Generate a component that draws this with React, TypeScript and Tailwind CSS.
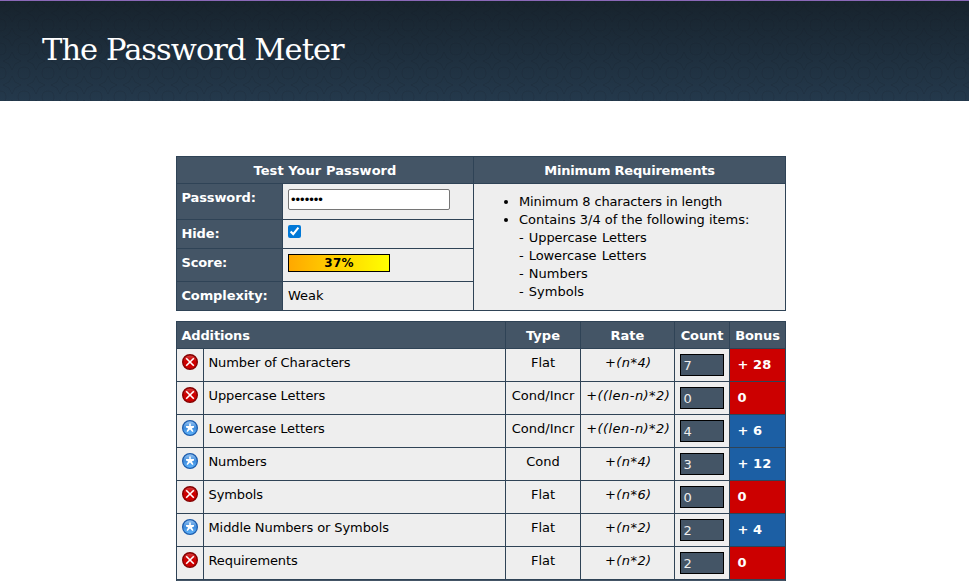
import type { ReactNode } from "react";

type Row = { ok: boolean; name: string; type: string; rate: string; count: string; bonus: string };

const rows: Row[] = [
  { ok: false, name: "Number of Characters", type: "Flat", rate: "+(n*4)", count: "7", bonus: "+ 28" },
  { ok: false, name: "Uppercase Letters", type: "Cond/Incr", rate: "+((len-n)*2)", count: "0", bonus: "0" },
  { ok: true, name: "Lowercase Letters", type: "Cond/Incr", rate: "+((len-n)*2)", count: "4", bonus: "+ 6" },
  { ok: true, name: "Numbers", type: "Cond", rate: "+(n*4)", count: "3", bonus: "+ 12" },
  { ok: false, name: "Symbols", type: "Flat", rate: "+(n*6)", count: "0", bonus: "0" },
  { ok: true, name: "Middle Numbers or Symbols", type: "Flat", rate: "+(n*2)", count: "2", bonus: "+ 4" },
  { ok: false, name: "Requirements", type: "Flat", rate: "+(n*2)", count: "2", bonus: "0" },
];

function Head({ children, className = "pl-[4.4px] tracking-[-0.1px]" }: { children: ReactNode; className?: string }) {
  return (
    <div className={`bg-[#445566] pt-[5px] font-bold text-white whitespace-nowrap leading-[18px] ${className}`}>
      {children}
    </div>
  );
}

function StatusIcon({ ok }: { ok: boolean }) {
  return ok ? (
    <svg width="16" height="16" viewBox="0 0 16 16">
      <defs>
        <linearGradient id="blue" x1="0" y1="0" x2="0" y2="1">
          <stop offset="0" stopColor="#9cc8f4" />
          <stop offset="0.5" stopColor="#3f8cdc" />
          <stop offset="1" stopColor="#62b8ff" />
        </linearGradient>
      </defs>
      <circle cx="8" cy="8" r="7.4" fill="url(#blue)" stroke="#1c5cac" strokeWidth="1.2" />
      <path d="M7.200 3.500H8.800V6H12V7.500L9.900 8.400 11.500 11.200 10.400 12 8 9.600 5.600 12 4.500 11.200 6.100 8.400 4 7.500V6H7.200Z" fill="#fff" />
    </svg>
  ) : (
    <svg width="16" height="16" viewBox="0 0 16 16">
      <defs>
        <linearGradient id="red" x1="0" y1="0" x2="0" y2="1">
          <stop offset="0" stopColor="#d84040" />
          <stop offset="0.45" stopColor="#cc0000" />
          <stop offset="1" stopColor="#d00000" />
        </linearGradient>
      </defs>
      <circle cx="8" cy="8" r="7.3" fill="url(#red)" stroke="#840000" strokeWidth="1.4" />
      <path d="M4.200 4.200 11.800 11.800M11.800 4.200 4.200 11.800" stroke="#fff" strokeWidth="1.6" />
    </svg>
  );
}

export default function App() {
  return (
    <div className="h-[581px] overflow-hidden bg-white text-[13px] leading-[18px] text-black [font-family:'DejaVu_Sans',Verdana,sans-serif]">
      <header className="h-[101px] border-t border-[#8a68b8] bg-linear-to-b from-[#17232d] to-[#24394c]">
        <svg className="absolute" width="969" height="100">
          <defs>
            <pattern id="weave" width="24" height="24" patternUnits="userSpaceOnUse">
              <path d="M0 6Q6 6 6 0M18 0Q18 6 24 6M0 18Q6 18 6 24M18 24Q18 18 24 18M12 3 15 9 21 12 15 15 12 21 9 15 3 12 9 9Z" fill="none" stroke="#0a1520" strokeOpacity="0.16" />
            </pattern>
          </defs>
          <rect width="969" height="100" fill="url(#weave)" />
        </svg>
        <h1 className="relative ml-[42px] pt-[29px] text-[30.500px] leading-[40px] text-white whitespace-nowrap [font-family:'DejaVu_Serif',Georgia,serif]">
          <span className="tracking-[-0.95px]">The Password Meter</span>
        </h1>
      </header>

      <main className="ml-[176px] mt-[55px] w-[610px]">
        <section className="grid grid-cols-[105px_190px_311px] grid-rows-[26px_35px_28px_32px_28px] gap-px bg-[#2f4356] p-px">
          <Head className="col-span-2 text-center tracking-[0.06px]">Test Your Password</Head>
          <Head className="text-center tracking-[-0.2px]">Minimum Requirements</Head>
          <Head>Password:</Head>
          <div className="bg-[#eee] p-[5px]">
            <input
              type="password"
              defaultValue="1234567"
              className="block h-[21px] w-[162px] rounded-[2px] border border-[#767676] bg-white px-[2px] text-[13px] leading-[15px] [font-family:'Liberation_Sans',Arial,sans-serif]"
            />
          </div>
          <div className="row-span-4 bg-[#eee] pl-[45px] pt-[9px] whitespace-nowrap">
            <ul className="list-disc">
              <li><span className="tracking-[-0.14px]">Minimum 8 characters in length</span></li>
              <li>
                <span className="tracking-[-0.03px]">Contains 3/4 of the following items:</span>
                <br />
                <span className="tracking-[-0.1px] [word-spacing:1.2px]">- Uppercase Letters</span>
                <br />
                <span className="tracking-[-0.1px] [word-spacing:1.2px]">- Lowercase Letters</span>
                <br />
                <span className="[word-spacing:1px]">- Numbers</span>
                <br />
                <span className="[word-spacing:1px]">- Symbols</span>
              </li>
            </ul>
          </div>
          <Head>Hide:</Head>
          <div className="bg-[#eee] p-[5px]">
            <input type="checkbox" defaultChecked className="block size-[13px] accent-[#0078d7]" />
          </div>
          <Head>Score:</Head>
          <div className="bg-[#eee] p-[5px]">
            <div className="h-[18px] w-[102px] border border-black bg-linear-to-r from-[#ffa800] to-[#ffff00] text-center text-[12px] font-bold leading-[16px] tracking-[0.2px]">
              37%
            </div>
          </div>
          <Head>Complexity:</Head>
          <div className="bg-[#eee] p-[5px]">Weak</div>
        </section>

        <section className="mt-[10px] grid auto-rows-[32px] grid-cols-[26px_301px_74px_93px_54px_55px] grid-rows-[26px] gap-px bg-[#2f4356] p-px">
          <Head className="col-span-2 pl-[4.4px] tracking-[-0.15px]">Additions</Head>
          <Head className="text-center">Type</Head>
          <Head className="text-center">Rate</Head>
          <Head className="text-center tracking-[-0.1px]">Count</Head>
          <Head className="text-center tracking-[-0.1px]">Bonus</Head>
          {rows.map((r) => (
            <div key={r.name} className="contents">
              <div className="bg-[#eee] p-[5px]"><StatusIcon ok={r.ok} /></div>
              <div className="bg-[#eee] py-[5px] pl-[4.5px] tracking-[-0.1px]">{r.name}</div>
              <div className="flex justify-center bg-[#eee] pt-[5px] whitespace-nowrap">{r.type}</div>
              <div className="flex justify-center bg-[#eee] pt-[5px] pl-[1.500px] italic tracking-[0.45px] whitespace-nowrap">{r.rate}</div>
              <div className="bg-[#eee] p-[5px]">
                <div className="h-[22px] w-[44px] border border-black bg-[#445566] pl-[2.500px] pt-[2px] text-[#eee]">{r.count}</div>
              </div>
              <div className={`pl-[7.400px] pt-[7px] font-bold tracking-[0.15px] text-white ${r.ok ? "bg-[#1c5fa4]" : "bg-[#c00]"}`}>
                {r.bonus}
              </div>
            </div>
          ))}
          <div className="col-span-6 bg-[#445566]" />
        </section>
      </main>
    </div>
  );
}
